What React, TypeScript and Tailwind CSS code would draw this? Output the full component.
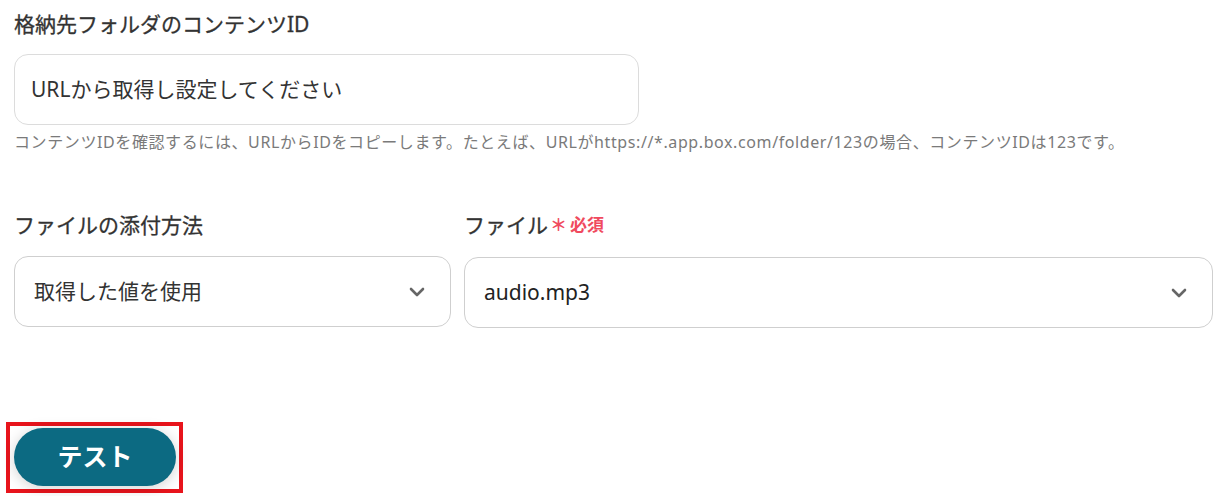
import React from "react";

function Chevron() {
  return (
    <svg width="16" height="10" viewBox="0 0 16 10" fill="none">
      <path d="M2 2l6 6 6-6" stroke="#666666" strokeWidth="2.6" strokeLinecap="round" strokeLinejoin="round" />
    </svg>
  );
}

function App() {
  return (
    <div
      className="w-[1220px] h-[496px] bg-white pl-[14px] pr-[7px] pt-[8px] text-[#333333] overflow-hidden"
      style={{ fontFamily: '"Noto Sans", "Noto Sans CJK JP", sans-serif' }}
    >
      {/* Folder content ID */}
      <div className="text-[21px] leading-[32px] font-normal [-webkit-text-stroke:0.3px]">
        格納先フォルダのコンテンツID
      </div>
      <div className="mt-[14px] w-[625px] h-[71px] border border-[#dcdcdc] rounded-[14px] flex items-center px-[16px]">
        <span className="text-[21px] text-[#333333]">URLから取得し設定してください</span>
      </div>
      <p className="mt-[6px] text-[16px] leading-[22px] text-[#7a7a7a] tracking-[0.6px]">
        コンテンツIDを確認するには、URLからIDをコピーします。たとえば、URLがhttps://*.app.box.com/folder/123の場合、コンテンツIDは123です。
      </p>

      {/* Attachment row */}
      <div className="mt-[56px] flex gap-[13px]">
        <div className="w-[437px]">
          <div className="text-[21px] leading-[32px] font-normal [-webkit-text-stroke:0.3px]">ファイルの添付方法</div>
          <div className="mt-[15px] h-[71px] border border-[#cfcfcf] rounded-[14px] flex items-center justify-between pl-[19px] pr-[25px]">
            <span className="text-[21px]">取得した値を使用</span>
            <Chevron />
          </div>
        </div>
        <div className="flex-1">
          <div className="flex items-center text-[21px] leading-[32px] font-normal">
            <span className="[-webkit-text-stroke:0.3px]">ファイル</span>
            <span className="ml-[2px] text-[#f04a5e] text-[17px] font-bold">＊</span>
            <span className="ml-[3px] text-[#f04a5e] text-[17px] font-bold">必須</span>
          </div>
          <div className="mt-[16px] h-[71px] border border-[#cfcfcf] rounded-[14px] flex items-center justify-between pl-[19px] pr-[25px]">
            <span className="text-[21px] text-[#222222]">audio.mp3</span>
            <Chevron />
          </div>
        </div>
      </div>

      {/* Test button */}
      <div className="mt-[94px] ml-[-8px] inline-block border-4 border-[#e8141c] pl-[4px] pt-[2px] pr-[3px] pb-[3px]">
        <button className="w-[162px] h-[58px] rounded-full bg-[#0c6a82] text-white text-[25px] font-bold shadow-[0_2px_14px_rgba(0,0,0,0.18)]">
          テスト
        </button>
      </div>
    </div>
  );
}

export default App;
